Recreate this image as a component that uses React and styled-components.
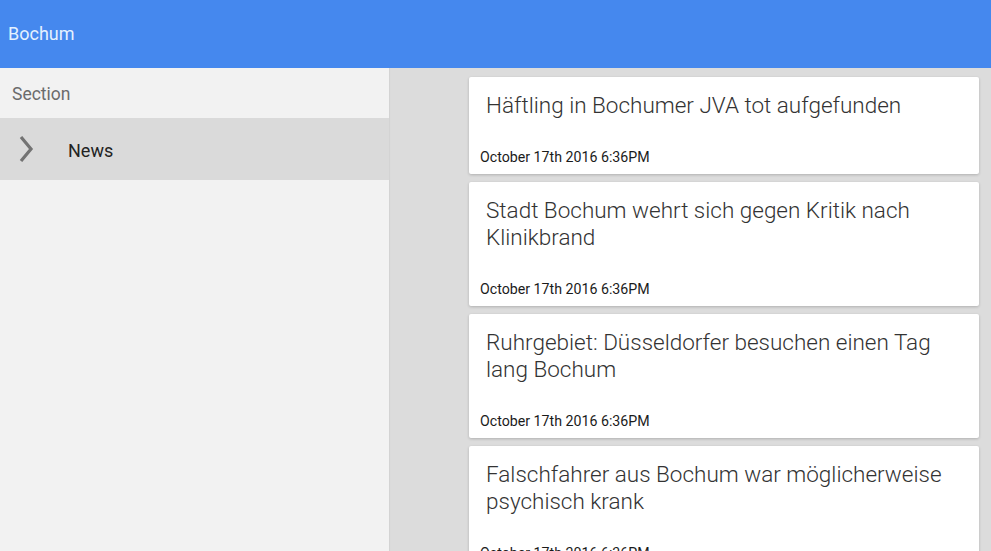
import React from "react"
import styled, { createGlobalStyle } from "styled-components"

const GlobalStyle = createGlobalStyle`
  html, body {
    margin: 0;
    padding: 0;
    height: 100%;
    overflow: hidden;
  }
  body {
    font-family: Roboto, "Liberation Sans", sans-serif;
    background: #dcdcdc;
  }
  #root {
    height: 100%;
  }
`

const Page = styled.div`
  display: flex;
  flex-direction: column;
  height: 551px;
  width: 991px;
`

const Header = styled.header`
  height: 68px;
  flex: none;
  background-color: #4588ee;
  color: #e4f1ff;
  font-size: 18px;
  display: flex;
  align-items: center;
  padding: 0 8px;
  box-sizing: border-box;
  padding-bottom: 1px;
  position: relative;
  z-index: 2;
`

const Body = styled.div`
  flex: 1;
  display: flex;
  min-height: 0;
`

const Sidebar = styled.nav`
  width: 389px;
  flex: none;
  background-color: #f2f2f2;
  box-shadow: 1px 0 1px rgba(0, 0, 0, 0.04);
`

const SectionLabel = styled.div`
  height: 50px;
  display: flex;
  align-items: center;
  padding-left: 12px;
  padding-top: 2px;
  box-sizing: border-box;
  color: #6b6b6b;
  font-size: 17.5px;
`

const NavItem = styled.div`
  height: 62px;
  display: flex;
  align-items: center;
  padding-top: 2px;
  box-sizing: border-box;
  background-color: ${props => (props.active ? "#dadada" : "transparent")};
  color: #222;
  font-size: 18px;
`

const Chevron = styled.svg`
  width: 16px;
  height: 28px;
  margin-left: 18px;
  margin-right: 34px;
  margin-top: -2px;
  flex: none;
`

const Feed = styled.main`
  flex: 1;
  display: flex;
  flex-direction: column;
  gap: 8px;
  padding: 9px 12px 0 80px;
  overflow: hidden;
`

const Card = styled.article`
  background: #fff;
  border-radius: 2px;
  box-shadow: 0 1px 3px rgba(0, 0, 0, 0.2);
  padding: 15px 12px 9px 11px;
  flex: none;
`

const Title = styled.h2`
  margin: 0 0 30px 6px;
  font-size: 22.5px;
  line-height: 27px;
  font-weight: 300;
  color: #333;
  padding-right: 20px;
`

const Stamp = styled.div`
  font-size: 14.2px;
  line-height: 16px;
  color: #1b1b1b;
`

const articles = [
  "Häftling in Bochumer JVA tot aufgefunden",
  "Stadt Bochum wehrt sich gegen Kritik nach Klinikbrand",
  "Ruhrgebiet: Düsseldorfer besuchen einen Tag lang Bochum",
  "Falschfahrer aus Bochum war möglicherweise psychisch krank",
]

const App = () => {
  return (
    <Page>
      <GlobalStyle />
      <Header>Bochum</Header>
      <Body>
        <Sidebar>
          <SectionLabel>Section</SectionLabel>
          <NavItem active>
            <Chevron viewBox="0 0 16 28">
              <polyline
                points="3,2 13,14 3,26"
                fill="none"
                stroke="#737373"
                strokeWidth="3.2"
              />
            </Chevron>
            News
          </NavItem>
        </Sidebar>
        <Feed>
          {articles.map(title => (
            <Card key={title}>
              <Title>{title}</Title>
              <Stamp>October 17th 2016 6:36PM</Stamp>
            </Card>
          ))}
        </Feed>
      </Body>
    </Page>
  )
}

export default App
